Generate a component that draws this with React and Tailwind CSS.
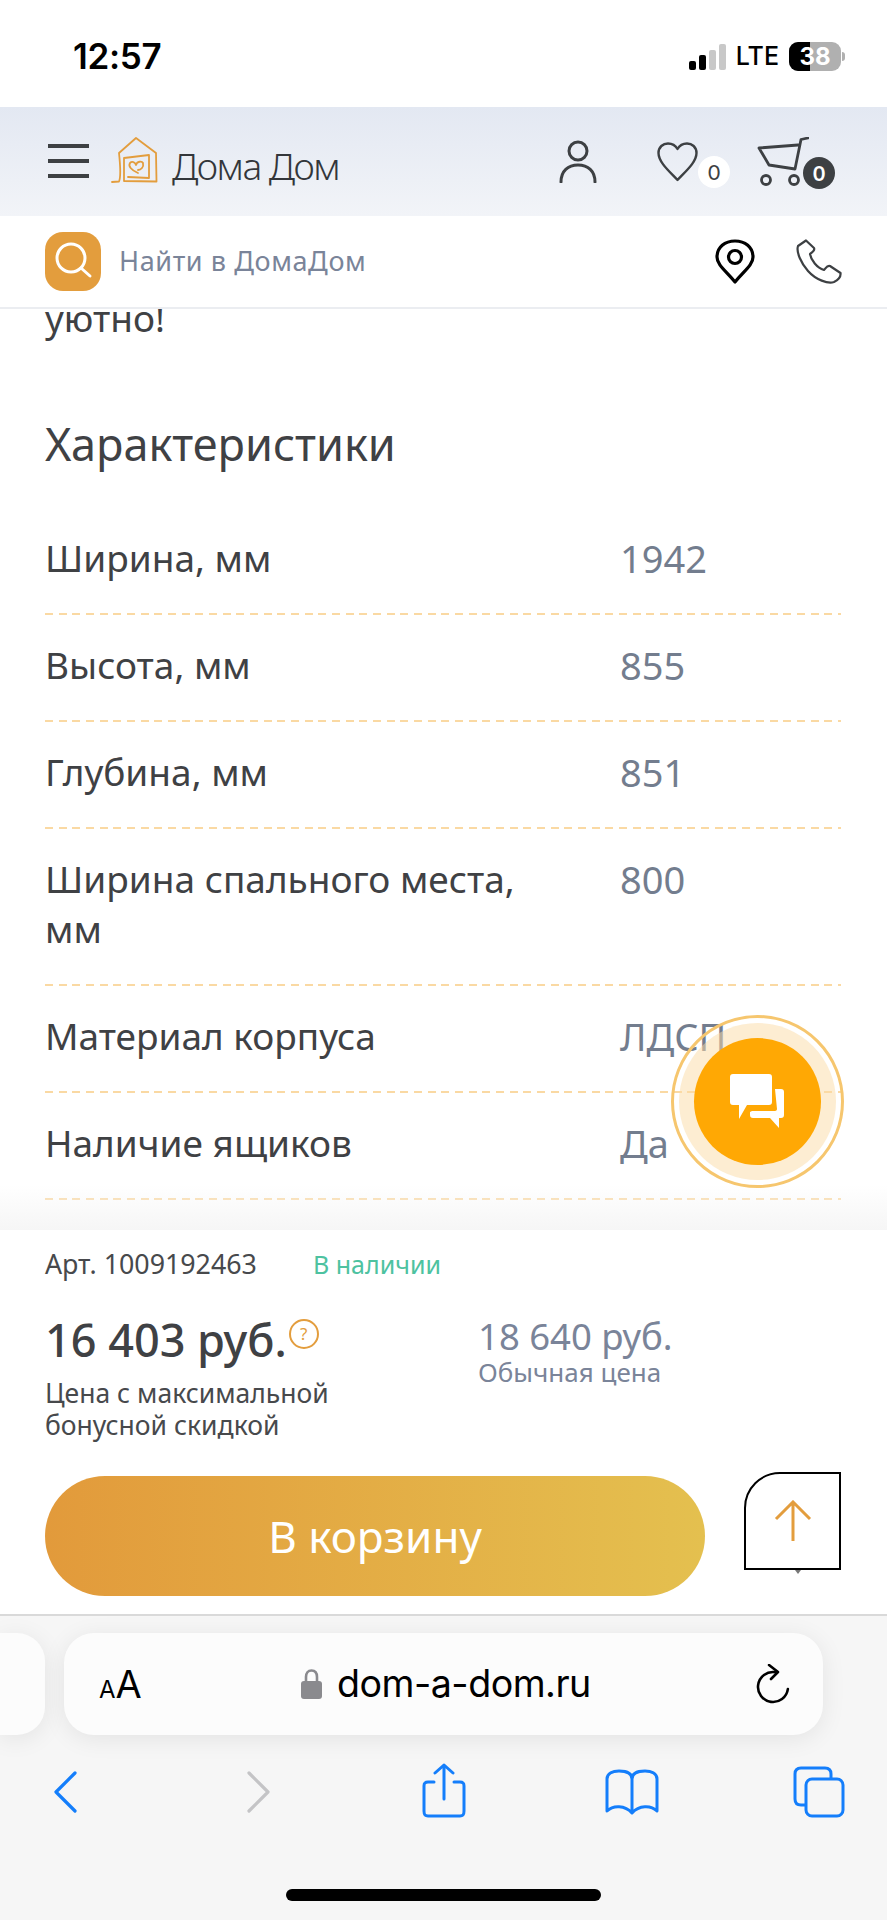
import React from 'react';

const specs = [
  ['Ширина, мм', '1942'],
  ['Высота, мм', '855'],
  ['Глубина, мм', '851'],
  ['Ширина спального места, мм', '800'],
  ['Материал корпуса', 'ЛДСП'],
  ['Наличие ящиков', 'Да'],
];

const StatusBar = () => (
  <div className="h-[107px] shrink-0 bg-white flex items-center pl-[73px] pr-[42px] pt-[6px]">
    <span className="font-['Inter'] font-semibold text-[35px] text-black tracking-[-0.3px]">12:57</span>
    <div className="ml-auto flex items-center">
      <div className="flex items-end gap-[3px] h-[26px]">
        <div className="w-[7px] h-[9px] rounded-[2px] bg-black"></div>
        <div className="w-[7px] h-[15px] rounded-[2px] bg-black"></div>
        <div className="w-[7px] h-[20px] rounded-[2px] bg-[#c8c8c8]"></div>
        <div className="w-[7px] h-[26px] rounded-[2px] bg-[#c8c8c8]"></div>
      </div>
      <span className="ml-[10px] font-['Inter'] font-medium text-[25px] leading-none text-black">LTE</span>
      <div className="ml-[10px] relative w-[52px] h-[29px] rounded-[9px] overflow-hidden bg-[#b0b0b0] flex">
        <div className="w-[21px] h-full bg-black"></div>
        <span className="absolute inset-0 flex items-center justify-center font-['Inter'] font-bold text-[24px] text-white">38</span>
      </div>
      <div className="ml-[1px] w-[3px] h-[9px] rounded-r-full bg-[#b0b0b0]"></div>
    </div>
  </div>
);

const Logo = () => (
  <svg width="48" height="47" viewBox="0 0 48 47" fill="none" stroke="#e39d3d" strokeWidth="1.8" strokeLinecap="round" strokeLinejoin="round">
    <path d="M1 45 L8 44.5 C10 40 9.5 30 8 16 L25 1 L45 16 L45.5 44.5 L13 44 L13 21 L38 18 L38 41 L17 40" />
    <path d="M27 36 C20 33 17 29 19 26 C21 24 24 25 25 28 C26 24 31 24 32 26 C33 30 30 33 27 33" />
  </svg>
);

const Header = () => (
  <div className="h-[109px] shrink-0 bg-gradient-to-b from-[#e3e8f2] to-[#f2f4f8] flex items-center pl-[48px]">
    <div className="flex flex-col gap-[11px] w-[41px] -mt-[2px]">
      <div className="h-[4px] bg-[#3d4043]"></div>
      <div className="h-[4px] bg-[#3d4043]"></div>
      <div className="h-[4px] bg-[#3d4043]"></div>
    </div>
    <div className="ml-[22px] -mt-[3px]">
      <Logo />
    </div>
    <span className="ml-[13px] font-['Noto_Sans'] font-light text-[37px] tracking-[-1.5px] text-[#33363a] mt-[8px]">Дома Дом</span>
    <svg className="ml-[220px] -mt-[1px]" width="38" height="43" viewBox="0 0 38 43" fill="none" stroke="#3d4043" strokeWidth="3" strokeLinecap="round">
      <circle cx="19" cy="11" r="9" />
      <path d="M2 42 C2 31 9 25 19 25 C29 25 36 31 36 42" />
    </svg>
    <div className="ml-[60px] relative">
      <svg width="41" height="40" viewBox="0 0 41 40" fill="none" stroke="#3d4043" strokeWidth="2.4" strokeLinejoin="round">
        <path d="M20.5 38 C12 29 1.5 20 1.5 11 C1.5 5 6 1.5 11 1.5 C15 1.5 18.5 3.5 20.5 7 C22.5 3.5 26 1.5 30 1.5 C35 1.5 39.5 5 39.5 11 C39.5 20 29 29 20.5 38 Z" />
      </svg>
      <span className="absolute left-[41px] top-[14px] w-[32px] h-[32px] rounded-full bg-white flex items-center justify-center font-['Lato'] text-[21px] text-[#3d4043]">0</span>
    </div>
    <div className="ml-[59px] relative">
      <svg width="52" height="49" viewBox="0 0 52 49" fill="none" stroke="#3d4043" strokeWidth="2.8" strokeLinecap="round" strokeLinejoin="round">
        <path d="M51 1 L44 2.5 L38 32 L12 28 L2 11 L41 8" />
        <circle cx="9" cy="43" r="4.5" />
        <circle cx="37" cy="43" r="4.5" />
      </svg>
      <span className="absolute left-[46px] top-[20px] w-[32px] h-[32px] rounded-full bg-[#3d4043] flex items-center justify-center font-['Lato'] font-bold text-[21px] text-white">0</span>
    </div>
  </div>
);

const SearchRow = () => (
  <div className="h-[93px] shrink-0 bg-white border-b-2 border-[#ebedf1] flex items-center pl-[45px] pb-[1px]">
    <div className="w-[56px] h-[59px] rounded-[18px] bg-[#e39d3d] flex items-center justify-center">
      <svg width="42" height="42" viewBox="0 0 42 42" fill="none" stroke="white" strokeWidth="3" strokeLinecap="round">
        <circle cx="19" cy="18" r="14" />
        <path d="M29 28 L38 36" />
      </svg>
    </div>
    <span className="ml-[18px] font-['Noto_Sans'] text-[27px] tracking-[0.6px] text-[#7a8499]">Найти в ДомаДом</span>
    <svg className="ml-auto" width="40" height="45" viewBox="0 0 40 45" fill="none" stroke="#000" strokeWidth="3.2">
      <path d="M20 43 C11 32 2 26 2 18 C2 8 10 2 20 2 C30 2 38 8 38 18 C38 26 29 32 20 43 Z" strokeLinejoin="round" />
      <circle cx="20" cy="18" r="6.5" />
    </svg>
    <svg className="ml-[41px] mr-[45px]" width="46" height="45" viewBox="0 0 46 45" fill="none" stroke="#3d4043" strokeWidth="2.2" strokeLinejoin="round">
      <path d="M10 1.5 L2 7 C0 13 5 24 12 32 C20 41 32 45 38 43 C42 41 45 38 44.5 34 L34 27 C31 26 30 29 28 31 C21 29 15 21 14 15 C17 13 19 11 18 9 Z" />
    </svg>
  </div>
);

const Specs = () => (
  <div className="relative flex-1 min-h-0 overflow-hidden bg-white font-['Noto_Sans'] text-[#3f4144]">
    <p className="-mt-[16px] pl-[45px] text-[37px] leading-[50px]">уютно!</p>
    <h2 className="mt-[71px] pl-[45px] text-[45px] leading-[60px]">Характеристики</h2>
    <div className="mt-[34px] ml-[45px] mr-[46px]">
      {specs.map(([label, value]) => (
        <div key={label}>
          <div className="grid grid-cols-[575px_1fr] pt-[25px] pb-[30px] text-[37px] leading-[50px]">
            <span className="pr-[50px]">{label}</span>
            <span className="text-[#737d8e] text-[38px]">{value}</span>
          </div>
          <div className="h-[2px] bg-[repeating-linear-gradient(90deg,#fad9a3_0_8px,transparent_8px_13.67px)]"></div>
        </div>
      ))}
    </div>
    <div className="absolute left-0 right-0 bottom-0 h-[45px] bg-gradient-to-b from-white/0 to-[#f6f6f6]"></div>
  </div>
);

const ChatButton = () => (
  <div className="absolute left-[671px] top-[1015px] w-[173px] h-[173px] rounded-full border-[3px] border-[#f6c66e] flex items-center justify-center">
    <div className="w-[157px] h-[157px] rounded-full bg-[#fbdca6]/50 flex items-center justify-center">
      <div className="w-[127px] h-[127px] rounded-full bg-[#ffa804] flex items-center justify-center">
        <svg width="56" height="56" viewBox="0 0 56 56" fill="white">
          <path d="M3 0 H39 C41 0 42 1 42 3 V28 C42 30 41 31 39 31 H17 L9 45 V31 H3 C1 31 0 30 0 28 V3 C0 1 1 0 3 0 Z" />
          <path d="M45 15 H51 C53 15 54 16 54 18 V41 C54 43 53 44 51 44 H49 V54 L40 44 H23 C21 44 20 43 20 41 V38 L22 37 H45 C46 37 47 36 47 35 Z" />
        </svg>
      </div>
    </div>
  </div>
);

const BuyPanel = () => (
  <div className="h-[384px] shrink-0 bg-white font-['Noto_Sans'] pl-[45px] pr-[46px]">
    <div className="flex items-center pt-[18px] h-[50px] leading-[32px]">
      <span className="text-[#47494c] text-[26.8px] w-[268px]">Арт. 1009192463</span>
      <span className="text-[#4dc2a0] text-[25px]">В наличии</span>
    </div>
    <div className="flex mt-[30px] h-[173px]">
      <div className="w-[433px]">
        <div className="flex items-start">
          <span className="text-[45px] leading-[60px] font-medium text-[#3f4144]">16 403 руб.</span>
          <span className="mt-[9px] ml-[2px] w-[30px] h-[30px] rounded-full border-2 border-[#e39d3d] flex items-center justify-center text-[17px] text-[#e39d3d]">?</span>
        </div>
        <p className="mt-[7px] text-[26.5px] leading-[32px] text-[#47494c]">Цена с максимальной<br />бонусной скидкой</p>
      </div>
      <div className="text-[#7a8499]">
        <div className="text-[36.5px] leading-[48px] mt-[2px]">18 640 руб.</div>
        <div className="text-[26px] leading-[30px] -mt-[3px]">Обычная цена</div>
      </div>
    </div>
    <div className="flex items-start -mt-[11px]">
      <button className="mt-[4px] w-[660px] h-[120px] rounded-full bg-gradient-to-r from-[#e29a3b] to-[#e4c04f] flex items-center justify-center text-[44px] text-white font-['Noto_Sans']">В корзину</button>
      <div className="relative ml-[39px] w-[97px] h-[98px] border-2 border-black rounded-tl-[36px] flex items-center justify-center">
        <svg width="38" height="42" viewBox="0 0 38 42" fill="none" stroke="#e39d3d" strokeWidth="3">
          <path d="M19 41 V2 M2 19 L19 2 L36 19" />
        </svg>
        <div className="absolute -bottom-[6px] left-[49px] w-0 h-0 border-x-[3px] border-x-transparent border-t-[4px] border-t-[#777]"></div>
      </div>
    </div>
  </div>
);

const BrowserBar = () => (
  <div className="h-[306px] shrink-0 bg-[#f6f6f6] border-t-2 border-[#d9d9d9] flex flex-col">
    <div className="flex mt-[17px] h-[102px]">
      <div className="w-[45px] rounded-r-[28px] bg-[#fcfcfc] shadow-[0_4px_24px_rgba(0,0,0,0.08)]"></div>
      <div className="ml-[19px] w-[759px] rounded-[30px] bg-[#fcfcfc] shadow-[0_4px_24px_rgba(0,0,0,0.08)] flex items-center pl-[35px] pr-[33px] text-black">
        <span className="font-['Inter'] leading-none flex items-baseline w-[44px]">
          <span className="text-[24px]">A</span>
          <span className="text-[38px]">A</span>
        </span>
        <svg className="ml-[158px]" width="21" height="30" viewBox="0 0 21 30" fill="#8a8a8e">
          <path d="M5 13 V8 C5 4 7 1.5 10.5 1.5 C14 1.5 16 4 16 8 V13" fill="none" stroke="#8a8a8e" strokeWidth="2.6" />
          <rect x="0" y="12" width="21" height="18" rx="3" />
        </svg>
        <span className="ml-[15px] font-['Inter'] text-[37.6px] tracking-[-0.5px] leading-none">dom-a-dom.ru</span>
        <svg className="ml-auto" width="34" height="40" viewBox="0 0 34 40" fill="none" stroke="#000" strokeWidth="2.6" strokeLinecap="round" strokeLinejoin="round">
          <path d="M17 8 A15 15 0 1 0 32 23" transform="rotate(8 17 23)" />
          <path d="M13 1 L22 8 L15 15" />
        </svg>
      </div>
    </div>
    <div className="flex items-center mt-[30px] pl-[54px]">
      <svg width="23" height="42" viewBox="0 0 23 42" fill="none" stroke="#147efb" strokeWidth="3.2" strokeLinecap="round" strokeLinejoin="round">
        <path d="M21 2 L2 21 L21 40" />
      </svg>
      <svg className="ml-[170px]" width="23" height="42" viewBox="0 0 23 42" fill="none" stroke="#c4c4c6" strokeWidth="3.2" strokeLinecap="round" strokeLinejoin="round">
        <path d="M2 2 L21 21 L2 40" />
      </svg>
      <svg className="ml-[152px] -mt-[2px]" width="44" height="55" viewBox="0 0 44 55" fill="none" stroke="#147efb" strokeWidth="3" strokeLinecap="round" strokeLinejoin="round">
        <path d="M12 19 H6 C3 19 2 20 2 23 V48 C2 52 3 53 6 53 H38 C41 53 42 52 42 48 V23 C42 20 41 19 38 19 H32" />
        <path d="M22 36 V2 M13 10 L22 2 L31 10" />
      </svg>
      <svg className="ml-[139px]" width="54" height="46" viewBox="0 0 54 46" fill="none" stroke="#147efb" strokeWidth="3" strokeLinejoin="round">
        <path d="M27 10 C27 4 22 2 14 2 C8 2 2 4 2 10 V42 C8 36 20 36 27 44 C34 36 46 36 52 42 V10 C52 4 46 2 40 2 C32 2 27 4 27 10 Z M27 10 V44" />
      </svg>
      <svg className="ml-[134px]" width="52" height="52" viewBox="0 0 52 52" fill="none" stroke="#147efb" strokeWidth="3" strokeLinejoin="round">
        <path d="M13 39 H8 C4 39 2 37 2 33 V8 C2 4 4 2 8 2 H32 C36 2 38 4 38 8 V13" />
        <rect x="13" y="13" width="37" height="37" rx="6" />
      </svg>
    </div>
    <div className="mx-auto mt-[71px] w-[315px] h-[12px] rounded-full bg-black"></div>
  </div>
);

export default function App() {
  return (
    <div className="relative w-[887px] h-[1920px] overflow-hidden flex flex-col bg-white">
      <StatusBar />
      <Header />
      <SearchRow />
      <Specs />
      <BuyPanel />
      <BrowserBar />
      <ChatButton />
    </div>
  );
}
